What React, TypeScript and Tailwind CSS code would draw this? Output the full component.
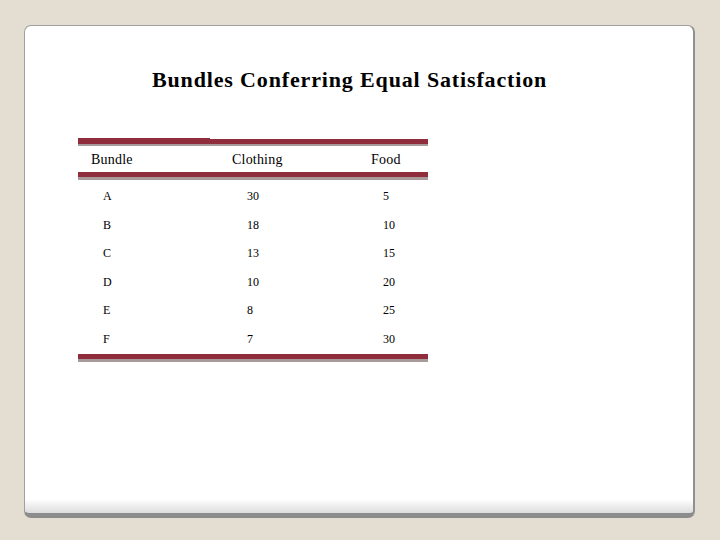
const rows = [
  { b: "A", c: "30", f: "5" },
  { b: "B", c: "18", f: "10" },
  { b: "C", c: "13", f: "15" },
  { b: "D", c: "10", f: "20" },
  { b: "E", c: "8", f: "25" },
  { b: "F", c: "7", f: "30" },
];

const Rule = () => (
  <div>
    <div className="h-[5px] bg-[#8f2d3c]" />
    <div className="h-[3px] bg-[#a8999b]" />
  </div>
);

const App = () => {
  return (
    <div className="w-[720px] h-[540px] bg-[#e3ddd2] pt-[25px] pl-[24px] font-['Liberation_Serif',serif] text-black">
      {/* Slide card */}
      <div className="w-[671px] h-[493px] rounded-[7px] border-l border-t border-r-2 border-b-[5px] border-[#a0a0a0] border-b-[#8c8c8c] border-r-[#909090] bg-[linear-gradient(to_bottom,#ffffff_calc(100%-14px),#dcdcdc)]">
        <h1 className="mt-[43px] pl-[127px] text-[22px] leading-none font-bold tracking-[0.85px]">
          Bundles Conferring Equal Satisfaction
        </h1>

        {/* Table */}
        <div className="mt-[47px] ml-[53px] w-[350px]">
          <div className="flex">
            <div className="w-[132px]">
              <div className="h-[6px] bg-[#8f2d3c]" />
              <div className="h-[2px] bg-[#a8999b]" />
            </div>
            <div className="flex-1 pt-[1px]">
              <div className="h-[5px] bg-[#8f2d3c]" />
              <div className="h-[2px] bg-[#a8999b]" />
            </div>
          </div>
          <div className="h-[26px] flex items-center pl-[13px] text-[14px] tracking-[0.2px]">
            <span className="w-[141px]">Bundle</span>
            <span className="w-[139px]">Clothing</span>
            <span>Food</span>
          </div>
          <Rule />
          <div className="pt-[2px] pb-[1px]">
            {rows.map((r) => (
              <div key={r.b} className="h-[28.5px] flex items-center pl-[25px] text-[12px]">
                <span className="w-[144px]">{r.b}</span>
                <span className="w-[136px]">{r.c}</span>
                <span>{r.f}</span>
              </div>
            ))}
          </div>
          <Rule />
        </div>
      </div>
    </div>
  );
};

export default App;
